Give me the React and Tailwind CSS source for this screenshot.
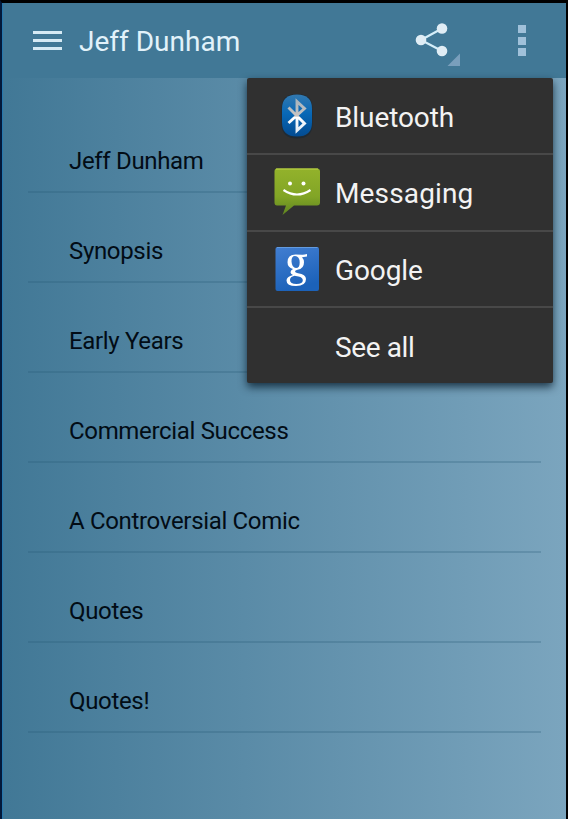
const SECTIONS = [
  "Jeff Dunham",
  "Synopsis",
  "Early Years",
  "Commercial Success",
  "A Controversial Comic",
  "Quotes",
  "Quotes!",
];

function BluetoothIcon() {
  return (
    <svg width="48" height="54" viewBox="0 0 48 54">
      <defs>
        <linearGradient id="bt" x1="0" y1="0" x2="0" y2="1">
          <stop offset="0" stopColor="#3279b0" />
          <stop offset="0.45" stopColor="#0868b6" />
          <stop offset="1" stopColor="#034b91" />
        </linearGradient>
        <linearGradient id="rune" x1="0" y1="0" x2="0" y2="1">
          <stop offset="0" stopColor="#a9b5bd" />
          <stop offset="0.5" stopColor="#c9c5c3" />
          <stop offset="0.55" stopColor="#fff" />
          <stop offset="1" stopColor="#e4edf5" />
        </linearGradient>
      </defs>
      <path d="M24 5C35 5 39.500 10 39.500 20V35C39.500 45 34 49.500 24 49.500S8.500 45 8.500 35V20C8.500 10 13 5 24 5Z" fill="#202a33" />
      <path d="M24 5.500C34 5.500 39 10.500 39 19.500V33.500C39 43 34 47.500 24 47.500S9 43 9 33.500V19.500C9 10.500 14 5.500 24 5.500Z" fill="url(#bt)" />
      <path d="M15.500 18.500L31.500 34.500L24 41.500V12.500L31.500 19.500L15.500 34" fill="none" stroke="url(#rune)" strokeWidth="2.900" />
    </svg>
  );
}

function MessagingIcon() {
  return (
    <svg width="48" height="54" viewBox="0 0 48 54">
      <defs>
        <linearGradient id="msg" x1="0" y1="0" x2="0" y2="1">
          <stop offset="0" stopColor="#93b22b" />
          <stop offset="0.6" stopColor="#82a526" />
          <stop offset="1" stopColor="#5f8420" />
        </linearGradient>
      </defs>
      <path d="M4 3.500H44Q47 3.500 47 6.500V37.500Q47 40.500 44 40.500H21L9.500 50L13 40.500H4Q1.500 40.500 1.500 37.500V6.500Q1.500 3.500 4 3.500Z" fill="url(#msg)" />
      <path d="M3 4H45" stroke="#c0d649" />
      <circle cx="17" cy="18.500" r="2" fill="#fff" />
      <circle cx="30.500" cy="18.500" r="2" fill="#fff" />
      <path d="M10.500 25Q24 34 37.500 25" fill="none" stroke="#fff" strokeWidth="2.200" />
    </svg>
  );
}

function GoogleIcon() {
  return (
    <svg width="48" height="54" viewBox="0 0 48 54">
      <defs>
        <linearGradient id="goog" x1="0" y1="0" x2="0.300" y2="1">
          <stop offset="0" stopColor="#427ed1" />
          <stop offset="1" stopColor="#1c62b9" />
        </linearGradient>
      </defs>
      <rect x="2.500" y="5" width="43.500" height="44" rx="2" fill="url(#goog)" />
      <path d="M4 5.500H44.500" stroke="#639bdf" />
      <path
        transform="translate(0 1)"
        d="M22.500 11.500Q27 11.500 29 11.800Q31 12 34 11V13.500L29 14.300Q31 16.500 31 19.300Q31 26 24.500 26.700Q22 27.200 22 28.200Q22 29.500 25 30.300Q33 31.500 33 36Q33 43 23 43Q13.500 43 13.500 37.500Q13.500 33.500 20 32Q17.500 31 17.500 29.200Q17.500 27.500 20 26Q14.500 24.500 14.500 19.300Q14.500 11.500 22.500 11.500ZM22 13Q18.300 13 18.500 18.500Q19 25 23 25Q26.700 25 26.700 19.500Q26.500 13 22 13ZM21.500 32.700Q17 33.800 17 37Q17 41 23.500 41Q29.800 41 29.800 37.200Q29.800 34.500 25.500 33.500Z"
        fill="#fff"
        fillRule="evenodd"
      />
    </svg>
  );
}

const TARGETS = [
  { label: "Bluetooth", Icon: BluetoothIcon },
  { label: "Messaging", Icon: MessagingIcon },
  { label: "Google", Icon: GoogleIcon },
  { label: "See all" },
];

const ROW_STYLES = {
  Bluetooth: { row: "h-[75px]", text: "tracking-[-0.1px] pt-[4px]" },
  Messaging: { row: "h-[76.500px] border-t-2 border-[#484848]", text: "tracking-[0.15px] pt-[3px]" },
  Google: { row: "h-[76.500px] border-t-2 border-[#484848]", text: "tracking-[-0.1px] pt-[4px]" },
  "See all": { row: "h-[77px] border-t-2 border-[#484848]", text: "tracking-[-0.4px] pt-[4px]" },
};

function ActionBar() {
  return (
    <header className="flex h-[75px] items-start bg-[#417896] text-[#e2f2fa]">
      <svg className="mt-[28px] ml-[30px] shrink-0" width="29" height="20" viewBox="0 0 29 20">
        <path d="M0 1.500H29M0 9.500H29M0 17.500H29" stroke="#d6eaf4" strokeWidth="3" />
      </svg>
      <h1 className="mt-[23px] ml-[17px] grow text-[28px] leading-8 whitespace-nowrap">Jeff Dunham</h1>
      <svg className="mt-[19px] shrink-0" width="46" height="46" viewBox="0 0 46 46">
        <path d="M28 6.500L7 18L28 29" fill="none" stroke="#d5eef9" strokeWidth="2.200" />
        <circle cx="7" cy="18" r="5.300" fill="#e0edf5" />
        <circle cx="28" cy="6.500" r="5.300" fill="#e0edf5" />
        <circle cx="28" cy="29" r="5.300" fill="#e0edf5" />
        <path d="M33.500 44H46V31.500Z" fill="#799fbc" />
      </svg>
      <svg className="mt-[22px] mr-[40px] ml-[58px] shrink-0" width="8" height="32" viewBox="0 0 8 32">
        <path d="M0 0H8V8H0ZM0 12H8V20H0ZM0 23H8V31H0Z" fill="#a0c1da" />
      </svg>
    </header>
  );
}

function ShareMenu() {
  return (
    <ul className="absolute top-[78px] left-[247px] w-[306px] rounded-[2px] bg-[#303030] shadow-[0_4px_9px_rgba(0,20,35,0.75)]">
      {TARGETS.map(({ label, Icon }) => (
        <li key={label} className={"flex items-center pl-[26px] " + ROW_STYLES[label].row}>
          <span className="flex w-[62px] shrink-0">{Icon && <Icon />}</span>
          <span className={"text-[28px] leading-8 whitespace-nowrap text-[#f3f3f3] " + ROW_STYLES[label].text}>{label}</span>
        </li>
      ))}
    </ul>
  );
}

export default function App() {
  return (
    <div className="relative h-[819px] w-[568px] overflow-hidden border-t-3 border-r-2 border-l-2 border-t-black border-r-black border-l-[#03193a] font-[Roboto,sans-serif]">
      <div className="h-full border-l border-[#2577ae] bg-linear-to-r from-[#417896] to-[#7ba5be]">
        <ActionBar />
        <main className="mt-[25px] mr-[25px] ml-[25px]">
          <ul>
            {SECTIONS.map((title) => (
              <li key={title} className="flex h-[90px] items-end border-b-2 border-[#245775]/25 pb-[14px] pl-[41px] text-[24px] leading-8 tracking-[-0.33px] text-[#020c15]">
                <span className="whitespace-nowrap">{title}</span>
              </li>
            ))}
          </ul>
        </main>
      </div>
      <div className="absolute -top-[3px] -left-[2px]">
        <ShareMenu />
      </div>
    </div>
  );
}
